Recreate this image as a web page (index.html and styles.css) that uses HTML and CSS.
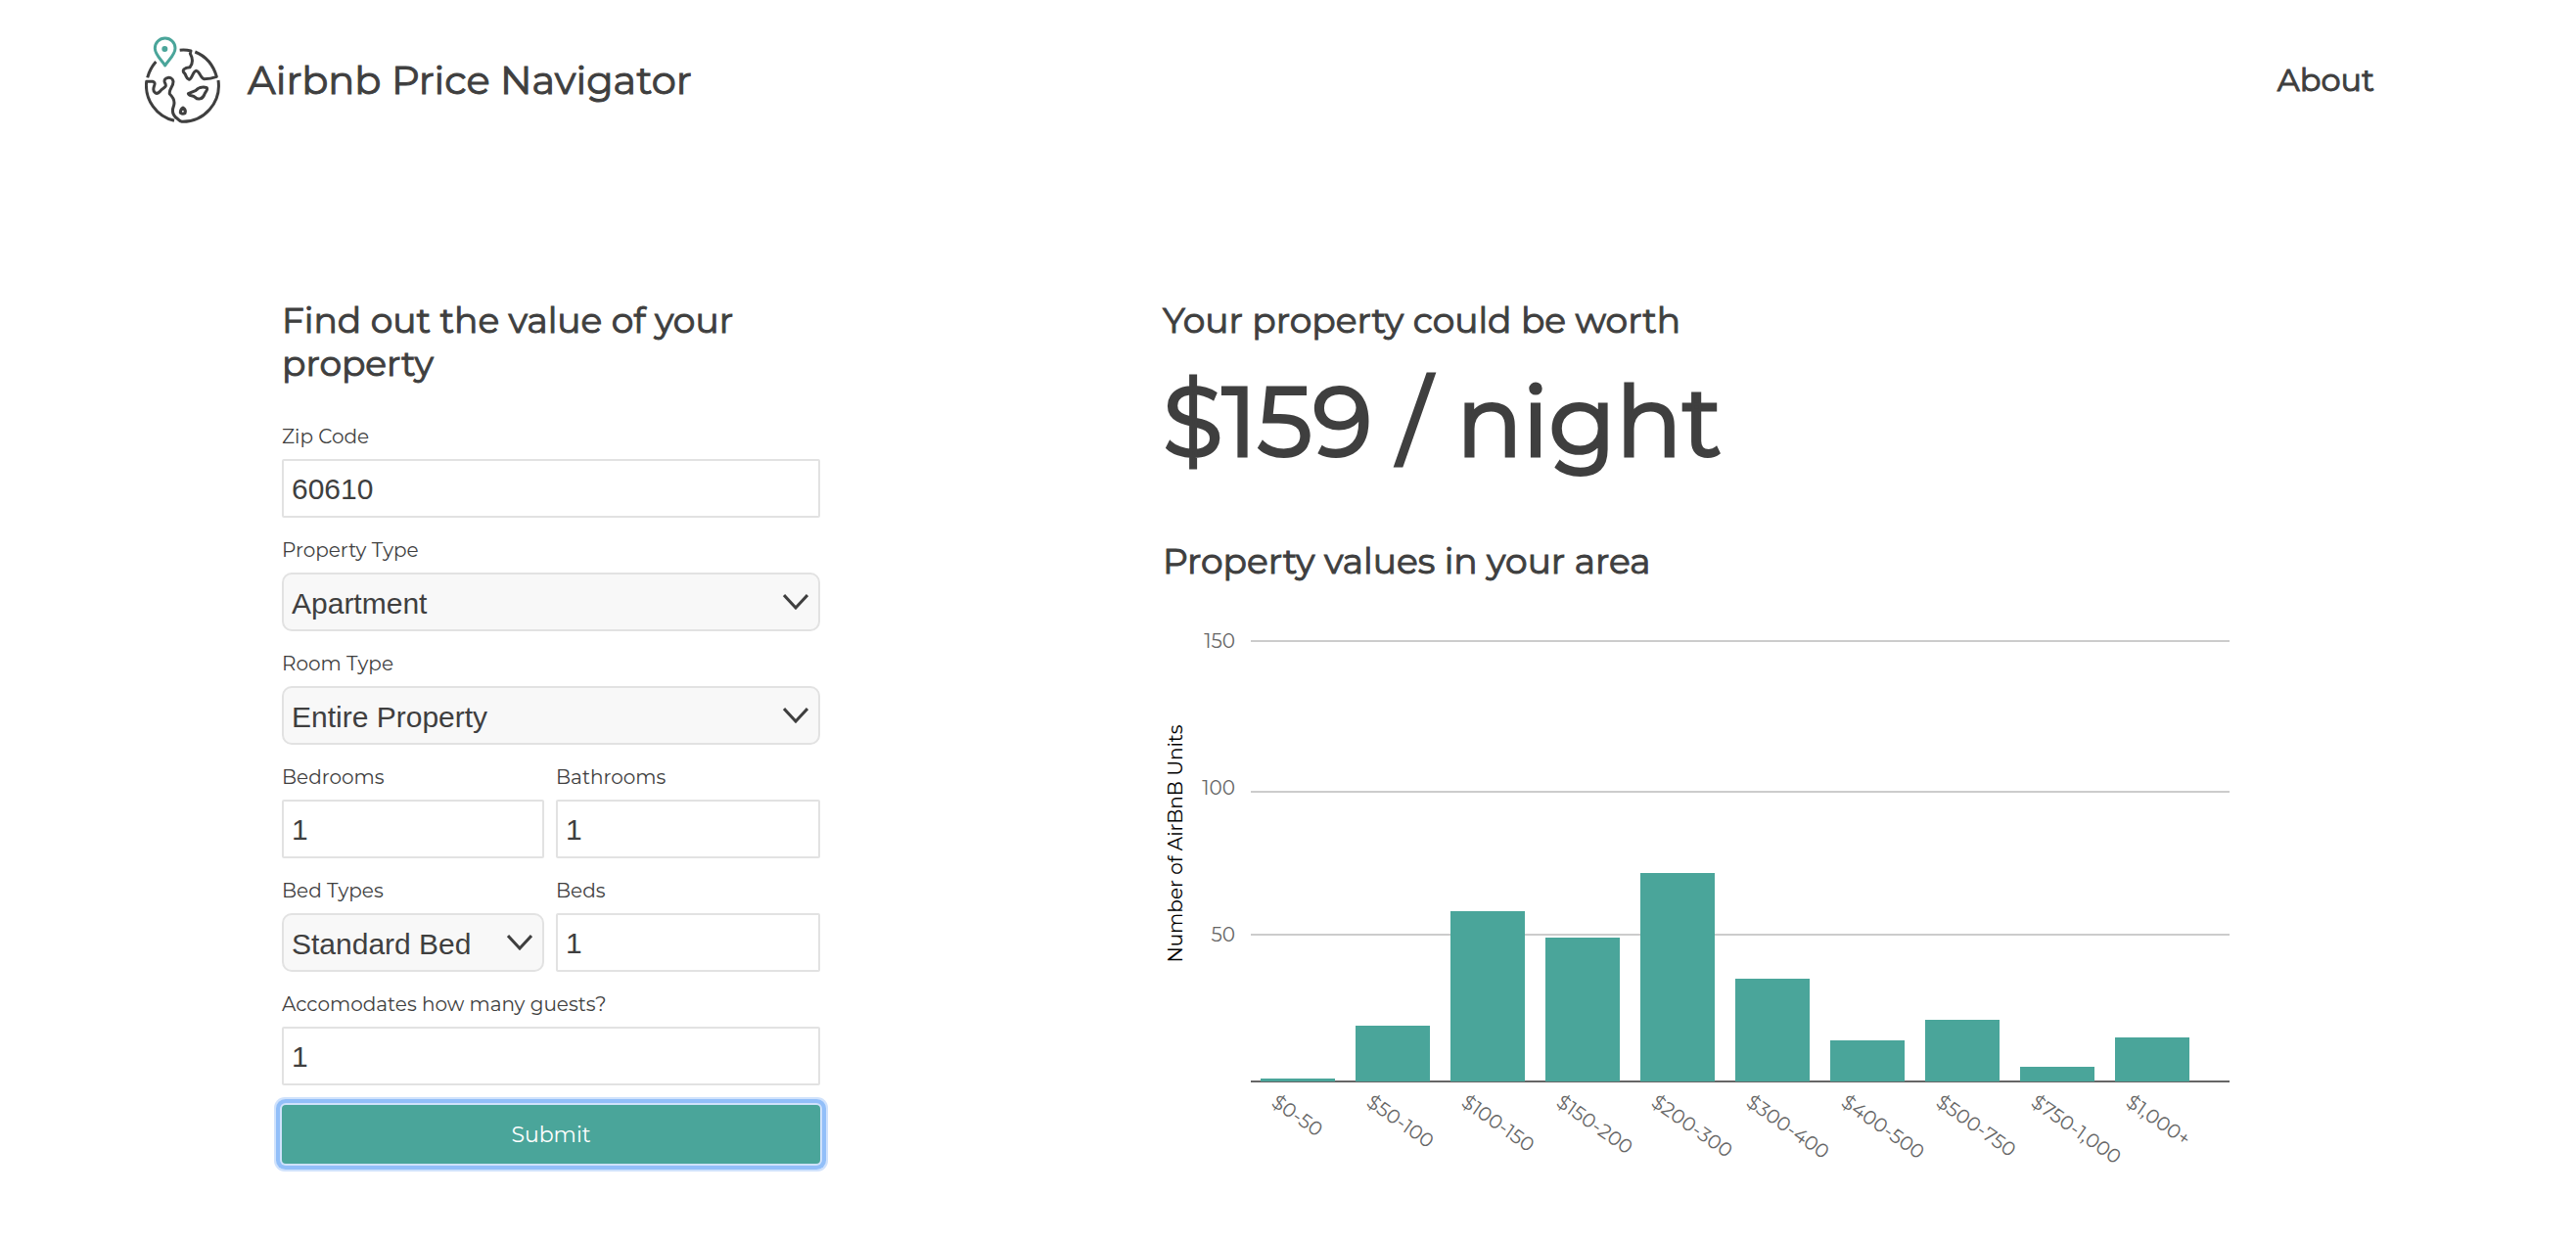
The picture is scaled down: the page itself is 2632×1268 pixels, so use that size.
FILE: index.html
```html
<!DOCTYPE html>
<html lang="en">
<head>
<meta charset="utf-8">
<meta name="viewport" content="width=device-width, initial-scale=1">
<title>Airbnb Price Navigator</title>
<link rel="stylesheet" href="styles.css">
</head>
<body>
<header class="site-header">
  <div class="brand">
    <svg class="brand-icon" viewBox="54 51 231 270" aria-hidden="true">
      <g class="globe">
        <path d="M88 129Q69 151 62 178"/>
        <path d="M144 310A111 111 0 0 1 59 190H78Q88 192 82 205C76 225 91 232 101 220C108 208 125 210 115 193C109 176 138 172 141 189C142 206 127 212 130 228C143 240 147 252 142 266C135 284 144 297 154 304Q161 311 168 313A111 111 0 0 0 279 186"/>
        <path d="M161 94Q178 92 195 96L193 104C202 120 202 134 192 146C176 147 165 156 176 165C182 173 180 181 190 184C199 182 201 158 212 157C224 160 224 181 236 182Q256 182 274 175Q258 119 208 99"/>
        <path d="M187 227L209 218C216 210 230 204 244 209C249 215 238 222 236 231C230 244 217 247 208 238C201 231 189 235 187 227Z"/>
        <path d="M171 270Q181 276 177 287Q170 291 163 286Q162 276 171 270Z"/>
      </g>
      <path class="pin" d="M116 141C106 124 85 109 85 88A31 31 0 0 1 147 88C147 109 126 124 116 141Z"/>
      <circle class="pin-dot" cx="115" cy="90" r="9"/>
    </svg>
    <span class="brand-name">Airbnb Price Navigator</span>
  </div>
  <nav><a class="nav-link" href="#about">About</a></nav>
</header>

<main class="content">
  <form class="estimate-form">
    <h2 class="heading">Find out the value of your property</h2>
    <div class="fields">
      <div class="field wide">
        <label for="zip">Zip Code</label>
        <input id="zip" type="text" value="60610">
      </div>
      <div class="field wide">
        <label for="property">Property Type</label>
        <div class="select-box">
          <select id="property"><option>Apartment</option></select>
          <svg class="chevron" viewBox="0 0 26 16" aria-hidden="true"><path d="M1 1L13 14L25 1"/></svg>
        </div>
      </div>
      <div class="field wide">
        <label for="room">Room Type</label>
        <div class="select-box">
          <select id="room"><option>Entire Property</option></select>
          <svg class="chevron" viewBox="0 0 26 16" aria-hidden="true"><path d="M1 1L13 14L25 1"/></svg>
        </div>
      </div>
      <div class="field">
        <label for="bedrooms">Bedrooms</label>
        <input id="bedrooms" type="text" value="1">
      </div>
      <div class="field">
        <label for="bathrooms">Bathrooms</label>
        <input id="bathrooms" type="text" value="1">
      </div>
      <div class="field">
        <label for="bedtype">Bed Types</label>
        <div class="select-box">
          <select id="bedtype"><option>Standard Bed</option></select>
          <svg class="chevron" viewBox="0 0 26 16" aria-hidden="true"><path d="M1 1L13 14L25 1"/></svg>
        </div>
      </div>
      <div class="field">
        <label for="beds">Beds</label>
        <input id="beds" type="text" value="1">
      </div>
      <div class="field wide">
        <label for="guests">Accomodates how many guests?</label>
        <input id="guests" type="text" value="1">
      </div>
    </div>
    <button class="submit" type="button">Submit</button>
  </form>

  <section class="results">
    <h2 class="heading">Your property could be worth</h2>
    <p class="price">$159 / night</p>
    <h2 class="heading">Property values in your area</h2>
    <svg class="chart" viewBox="0 0 1100 580" role="img" aria-label="Number of AirBnB units by nightly price">
      <text class="axis-title" transform="translate(20 243) rotate(-90)">Number of AirBnB Units</text>
      <g class="grid">
        <path d="M90 36H1090"/><path d="M90 190H1090"/><path d="M90 336H1090"/>
      </g>
      <path class="axis" d="M90 486H1090"/>
      <g class="ticks">
        <text x="74" y="43">150</text>
        <text x="74" y="193">100</text>
        <text x="74" y="343">50</text>
      </g>
      <g class="bars">
        <rect x="100" y="483" width="76" height="3"/>
        <rect x="197" y="429" width="76" height="57"/>
        <rect x="294" y="312" width="76" height="174"/>
        <rect x="391" y="339" width="76" height="147"/>
        <rect x="488" y="273" width="76" height="213"/>
        <rect x="585" y="381" width="76" height="105"/>
        <rect x="682" y="444" width="76" height="42"/>
        <rect x="779" y="423" width="76" height="63"/>
        <rect x="876" y="471" width="76" height="15"/>
        <rect x="973" y="441" width="76" height="45"/>
      </g>
      <g class="categories">
        <text transform="translate(110 510) rotate(35)">$0-50</text>
        <text transform="translate(207 510) rotate(35)">$50-100</text>
        <text transform="translate(304 510) rotate(35)">$100-150</text>
        <text transform="translate(401 510) rotate(35)">$150-200</text>
        <text transform="translate(498 510) rotate(35)">$200-300</text>
        <text transform="translate(595 510) rotate(35)">$300-400</text>
        <text transform="translate(692 510) rotate(35)">$400-500</text>
        <text transform="translate(789 510) rotate(35)">$500-750</text>
        <text transform="translate(886 510) rotate(35)">$750-1,000</text>
        <text transform="translate(983 510) rotate(35)">$1,000+</text>
      </g>
    </svg>
  </section>
</main>
</body>
</html>
```
FILE: styles.css
```css
* { box-sizing: border-box; }

body {
  margin: 0;
  background: #fff;
  color: #3f3f3f;
  font-family: Montserrat, Inter, sans-serif;
}

.site-header {
  display: flex;
  align-items: center;
  justify-content: space-between;
  padding: 37px 206px 36px 148px;
}

.brand { display: flex; align-items: center; gap: 28px; }
.brand-icon { width: 77px; height: 90px; }
.globe { fill: none; stroke: #3f3f3f; stroke-width: 9; stroke-linejoin: round; }
.pin { fill: #fff; stroke: #4aa59a; stroke-width: 9; stroke-linejoin: round; }
.pin-dot { fill: #4aa59a; }
.brand-name,
.nav-link { line-height: 56px; -webkit-text-stroke: 1px; }
.brand-name { font-size: 40px; }
.nav-link { color: inherit; font-size: 32px; text-decoration: none; }

.content {
  display: grid;
  grid-template-columns: minmax(0, 1fr) minmax(0, 2fr);
  gap: 350px;
  padding: 142px 344px 48px 288px;
}

.heading {
  margin: 0;
  font-size: 36px;
  font-weight: 400;
  line-height: 44px;
  -webkit-text-stroke: 1px;
}

.fields {
  display: grid;
  grid-template-columns: 134fr 135fr;
  gap: 20px 12px;
  margin-top: 40px;
}
.field { display: flex; flex-direction: column; gap: 10px; }
.wide { grid-column: 1 / -1; }
.field label { font-size: 20px; line-height: 26px; }

.field input,
.field select {
  width: 100%;
  height: 60px;
  margin: 0;
  padding: 2px 8px 0;
  border: 2px solid #e2e2e2;
  border-radius: 2px;
  background: #fff;
  color: #3f3f3f;
  font-family: "Liberation Sans", Helvetica, Arial, sans-serif;
  font-size: 30px;
}
.field select { border-radius: 10px; background: #f8f8f8; appearance: none; }
.select-box { position: relative; }
.chevron {
  position: absolute;
  top: 22px;
  right: 12px;
  width: 26px;
  height: 16px;
  fill: none;
  stroke: #3f3f3f;
  stroke-width: 3;
  pointer-events: none;
}

.submit {
  display: block;
  width: 100%;
  height: 60px;
  margin-top: 20px;
  border: 0;
  border-radius: 4px;
  background: #4aa59a;
  box-shadow: 0 0 0 2px #d0e2fc, 0 0 0 6px #92bff9, 0 0 0 8px #d0e2fc;
  color: #fff;
  font: inherit;
  font-size: 22px;
}

.price {
  margin: 10px 0 50px;
  font-size: 100px;
  line-height: 142px;
  -webkit-text-stroke: 3px;
}

.chart { display: block; width: 100%; margin-top: 24px; font-size: 20px; }
.axis-title { fill: #000; text-anchor: middle; }
.grid { stroke: #ccc; stroke-width: 2; }
.axis { stroke: #666; stroke-width: 2; }
.ticks { fill: #666; text-anchor: end; }
.bars { fill: #4aa59a; }
.categories { fill: #666; }
```
